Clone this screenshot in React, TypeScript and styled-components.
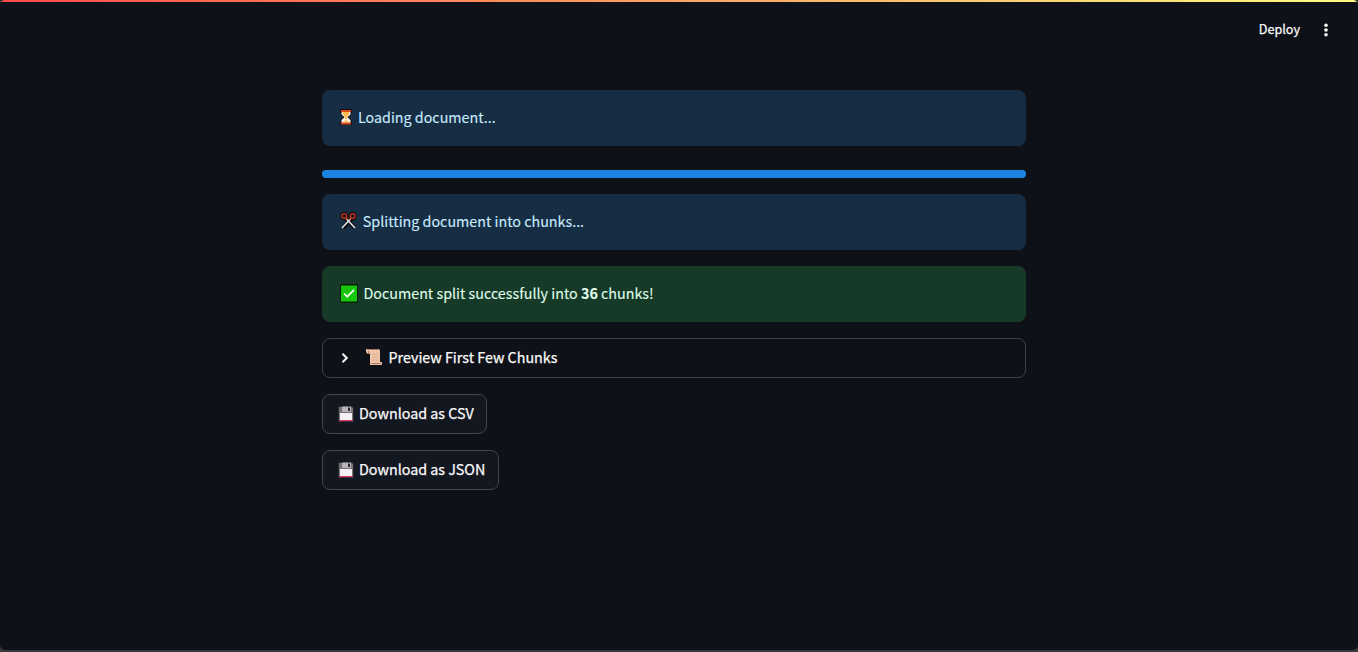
import React from "react";
import styled, { createGlobalStyle } from "styled-components";

const GlobalStyle = createGlobalStyle`
  *, *::before, *::after { box-sizing: border-box; }
  html { background: #39393d; }
  body {
    margin: 0;
    overflow: hidden;
    color: #fafafa;
    font-family: "Noto Sans CJK SC", "Noto Sans", sans-serif;
    font-size: 14.3px;
    line-height: 24px;
  }
`;

const Page = styled.div`
  height: 650px;
  background: #0e1117;
  border-radius: 5px;
  overflow: hidden;
`;

const Decoration = styled.div`
  height: 2px;
  background: linear-gradient(90deg, #ff4b4b, #fffd80);
`;

const Header = styled.header`
  display: flex;
  justify-content: flex-end;
  align-items: center;
  gap: 18px;
  height: 56px;
  padding-right: 24px;
`;

const DeployButton = styled.button`
  border: 0;
  padding: 0 0 2px;
  background: none;
  color: #fafafa;
  font: inherit;
  font-size: 12.6px;
  -webkit-text-stroke: 0.25px currentColor;
`;

const MenuButton = styled.button`
  display: flex;
  border: 0;
  padding: 0;
  background: none;
`;

const Content = styled.main`
  display: flex;
  flex-direction: column;
  align-items: flex-start;
  gap: 16px;
  width: 704px;
  margin: 32px 0 0 322px;
`;

const Alert = styled.div<{ $kind: "info" | "success" }>`
  display: flex;
  align-items: center;
  width: 100%;
  height: 56px;
  padding: 0 17px;
  border-radius: 8px;
  background: ${(p) => (p.$kind === "info" ? "#172d43" : "#173928")};
  color: ${(p) => (p.$kind === "info" ? "#c7ebff" : "#dffde9")};
`;

const Track = styled.div`
  width: 100%;
  height: 8px;
  margin-top: 8px;
  border-radius: 4px;
  background: #262730;
`;

const Fill = styled.div`
  width: 100%;
  height: 100%;
  border-radius: 4px;
  background: #1c83e1;
`;

const Expander = styled.div`
  display: flex;
  align-items: center;
  width: 100%;
  height: 40px;
  padding: 0 15px;
  border: 1px solid #3d4047;
  border-radius: 8px;
`;

const DownloadButton = styled.button<{ $width: number }>`
  display: flex;
  align-items: center;
  width: ${(p) => p.$width}px;
  height: 40px;
  padding: 0 0 0 14px;
  border: 1px solid #41444c;
  border-radius: 8px;
  background: #131720;
  color: #fafafa;
  font: inherit;
`;

const IconSlot = styled.span<{ $width: number; $raised?: boolean; $indent?: number }>`
  display: flex;
  flex: none;
  width: ${(p) => p.$width}px;
  padding-left: ${(p) => p.$indent ?? 0}px;
  padding-bottom: ${(p) => (p.$raised ? 2 : 0)}px;

  svg { flex: none; }
`;

const Label = styled.span<{ $strong?: boolean }>`
  padding-bottom: 2px;
  white-space: pre;
  -webkit-text-stroke: ${(p) => (p.$strong ? 0.25 : 0.12)}px currentColor;
`;

const Hourglass = () => (
  <svg width="16" height="18" viewBox="0 0 16 18">
    <path d="M1 1h12v4h-1v2L9.500 9.500l2.500 2V13h1v4H1v-4h1v-1.500l2.500-2L2 7V5H1z" fill="#180b0b" />
    <path d="M2.500 4h9v2.500L8.500 9.300l3 2.700v3h-9v-3l3-2.700-3-2.800z" fill="#f6efe8" />
    <path d="M4 4h6v2.500L7.800 9v2H6.200V9L4 6.500z" fill="#ffb84a" />
    <path d="M6.500 11.500h1L10 15H4z" fill="#ffca76" />
    <path d="M2 2h10v2H2zM2 14.500h10v2H2z" fill="#d94a20" />
  </svg>
);

const Scissors = () => (
  <svg width="18" height="18" viewBox="0 0 18 18" fill="none">
    <path d="M5.500 6l9 10M12.500 6l-9 10" stroke="#0c0d12" strokeWidth="4" />
    <circle cx="4.300" cy="4" r="2.500" stroke="#190c0d" strokeWidth="3.500" />
    <circle cx="12.700" cy="4" r="2.500" stroke="#190c0d" strokeWidth="3.500" />
    <path d="M6.500 7l8.500 9M10.500 7L2 16" stroke="#e8e5e4" strokeWidth="1.600" />
    <circle cx="4.300" cy="4" r="2.400" stroke="#c53a23" strokeWidth="1.300" />
    <circle cx="12.700" cy="4" r="2.400" stroke="#c53a23" strokeWidth="1.300" />
    <path d="M6 6l1.500 1.500M11 6L9.500 7.500" stroke="#c53a23" strokeWidth="1.300" />
  </svg>
);

const CheckBox = () => (
  <svg width="18" height="19" viewBox="0 0 18 19">
    <path d="M0 0h18v19H0z" fill="#062009" />
    <path d="M1 1.500h16v16H1z" fill="#16c60c" />
    <path d="M4 9.500l3.200 3.200L14 5.800" fill="none" stroke="#f3fff2" strokeWidth="1.700" />
  </svg>
);

const Scroll = () => (
  <svg width="17" height="18" viewBox="0 0 17 18">
    <path d="M0 1h12q2 0 2 2v11h2v2q0 1-1 1H4V6H2Q0 5 0 3z" fill="#f0c4a8" />
    <path d="M1 1.500h11M2.500 3v2.500H4M5 15.500h10" fill="none" stroke="#a57561" strokeWidth="1" />
    <path d="M6 6h6M6 9h6M6 12h6" stroke="#d9ac93" strokeWidth="1" />
  </svg>
);

const Floppy = () => (
  <svg width="17" height="18" viewBox="0 0 17 18">
    <path d="M0 1h14l2 2v14H0z" fill="#26262b" />
    <path d="M1 2h13l1 1v13H1z" fill="#737279" />
    <path d="M4 1.500h9V7H4z" fill="#b6b4b9" />
    <path d="M10 2.500h2V6h-2z" fill="#29292f" />
    <path d="M2 8h12v7H2z" fill="#f4eff3" />
    <path d="M1 15h14v1.300H1z" fill="#ce3b67" />
  </svg>
);

const Chevron = () => (
  <svg width="12" height="14" viewBox="0 0 12 14">
    <path d="M4.500 2.700L8.800 7l-4.300 4.300" fill="none" stroke="#fafafa" strokeWidth="2" />
  </svg>
);

export default function App() {
  return (
    <>
      <GlobalStyle />
      <Page>
        <Decoration />
        <Header>
          <DeployButton>Deploy</DeployButton>
          <MenuButton aria-label="Main menu">
            <svg width="16" height="16" viewBox="0 0 16 16" fill="#fafafa">
              <circle cx="8" cy="3.300" r="1.800" />
              <circle cx="8" cy="8" r="1.800" />
              <circle cx="8" cy="12.700" r="1.800" />
            </svg>
          </MenuButton>
        </Header>
        <Content>
          <Alert $kind="info">
            <IconSlot $width={19} $raised><Hourglass /></IconSlot>
            <Label>Loading document...</Label>
          </Alert>
          <Track><Fill /></Track>
          <Alert $kind="info">
            <IconSlot $width={23.8} $indent={1} $raised><Scissors /></IconSlot>
            <Label>Splitting document into chunks...</Label>
          </Alert>
          <Alert $kind="success">
            <IconSlot $width={24.5} $indent={1} $raised><CheckBox /></IconSlot>
            <Label>Document split successfully into <b>36</b> chunks!</Label>
          </Alert>
          <Expander>
            <IconSlot $width={28}><Chevron /></IconSlot>
            <IconSlot $width={22.5} $raised><Scroll /></IconSlot>
            <Label $strong>Preview First Few Chunks</Label>
          </Expander>
          <DownloadButton $width={165}>
            <IconSlot $width={22} $indent={1}><Floppy /></IconSlot>
            <Label $strong>Download as CSV</Label>
          </DownloadButton>
          <DownloadButton $width={177}>
            <IconSlot $width={22} $indent={1}><Floppy /></IconSlot>
            <Label $strong>Download as JSON</Label>
          </DownloadButton>
        </Content>
      </Page>
    </>
  );
}
